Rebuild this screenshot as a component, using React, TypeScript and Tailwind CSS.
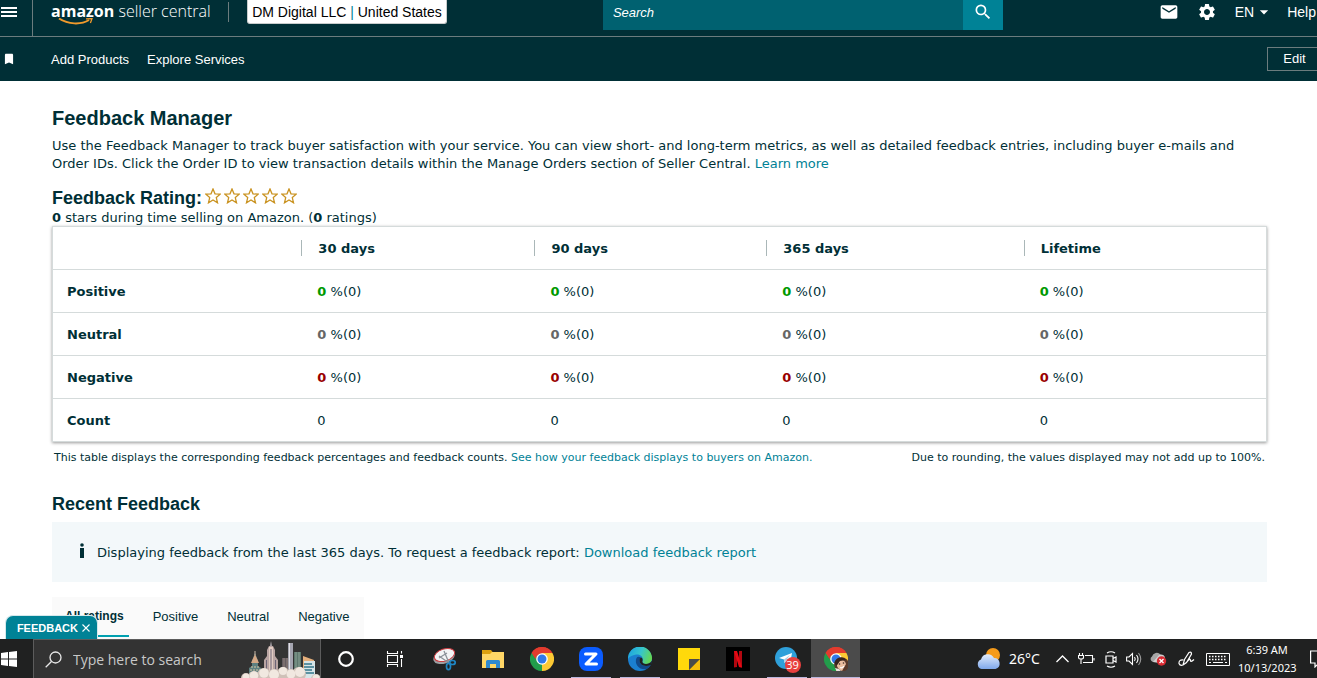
import type { ReactNode } from 'react';
import { MdBookmark, MdEmail, MdSettings, MdArrowDropDown, MdSearch } from 'react-icons/md';

const periods = ['30 days', '90 days', '365 days', 'Lifetime'];

const ratings = [
  { label: 'Positive', color: 'text-[#009900]' },
  { label: 'Neutral', color: 'text-[#666666]' },
  { label: 'Negative', color: 'text-[#990000]' },
];

function SellerLogo() {
  return (
    <a href="#" className="block w-[159px] whitespace-nowrap text-white">
      <span className="block h-[18px] font-['Open_Sans'] text-[16px] leading-[22px]">
        <b>amazon</b> <span className="font-['Open_Sans'] font-light">seller central</span>
      </span>
      <svg width="50" height="8" viewBox="0 0 50 8" fill="none">
        <path d="M8 .5C17 6.500 30 7 38 2" stroke="#f19a2c" strokeWidth="2" />
        <path d="M35 .8L41 .6L39.4 5" stroke="#f19a2c" strokeWidth="1.3" />
      </svg>
    </a>
  );
}

function Header() {
  return (
    <header className="bg-[#002f36] font-['Liberation_Sans',sans-serif] text-white">
      <div className="flex h-[37px] items-start justify-between border-b border-[#6b7c7e]">
        <div className="flex items-start">
          <button aria-label="Menu" className="flex h-9 w-[33px] items-start border-r border-[#6b7c7e] pt-[7px] pl-px">
            <svg width="16" height="11" viewBox="0 0 16 11" fill="#fff">
              <rect width="16" height="2" />
              <rect y="4" width="16" height="2" />
              <rect y="8" width="16" height="2" />
            </svg>
          </button>
          <div className="pl-[18px]">
            <SellerLogo />
          </div>
          <span className="mt-[2px] mr-[18px] ml-[18px] h-5 w-px bg-[#6b7c7e]" />
          <button className="h-6 w-[200px] rounded-b-[3px] border border-t-0 border-[#c8cccc] bg-white pt-px text-[14px] whitespace-nowrap text-black">
            <span className="font-medium">DM Digital LLC</span> <span className="text-[#008296]">|</span> United States
          </button>
        </div>
        <form className="flex h-[30px]">
          <input
            aria-label="Search"
            placeholder="Search"
            className="w-[360px] bg-[#006170] px-[10px] pb-1 text-[13px] italic placeholder:text-white"
          />
          <button aria-label="Submit search" type="button" className="flex w-10 justify-center bg-[#008296] pt-[2px]">
            <MdSearch size={20} />
          </button>
        </form>
        <div className="flex h-6 items-center pr-px text-[14px]">
          <button aria-label="Messages" className="mr-[18px]">
            <MdEmail size={20} />
          </button>
          <button aria-label="Settings" className="mr-[18px]">
            <MdSettings size={20} />
          </button>
          <button className="mr-[13px] flex items-center">
            EN
            <MdArrowDropDown size={20} />
          </button>
          <a href="#">Help</a>
        </div>
      </div>
      <div className="flex h-11 items-center text-[13px]">
        <button aria-label="Bookmarks" className="w-[51px] pl-[2px]">
          <MdBookmark size={14} />
        </button>
        <nav className="flex gap-[18px] pt-[2px]">
          <a href="#">Add Products</a>
          <a href="#">Explore Services</a>
        </nav>
        <button className="ml-auto h-6 w-[50px] border border-r-0 border-[#6b7c7e] pl-1">Edit</button>
      </div>
    </header>
  );
}

function Stars() {
  return (
    <span className="flex gap-[3px] pb-1" role="img" aria-label="0 out of 5 stars">
      {[1, 2, 3, 4, 5].map((n) => (
        <svg key={n} width="16" height="16" viewBox="0 0 16 16" fill="none" stroke="#c9921f" strokeWidth="1.3">
          <path d="M8 1L10 5.800L15.200 6.200L11.300 9.600L12.500 14.800L8 12L3.500 14.800L4.700 9.600L.8 6.200L6 5.800Z" />
        </svg>
      ))}
    </span>
  );
}

function RatingTable() {
  return (
    <table className="w-full table-fixed border-collapse text-left shadow-[0_1px_3px_rgba(0,0,0,0.4)]">
      <colgroup>
        <col className="w-[20.5%]" />
        <col className="w-[19.2%]" />
        <col className="w-[19.1%]" />
        <col className="w-[21.2%]" />
        <col className="w-[20%]" />
      </colgroup>
      <thead>
        <tr className="h-[43px] border border-[#d5dbdb]">
          <td />
          {periods.map((period) => (
            <th key={period} scope="col">
              <span className="flex items-center">
                <span className="mr-4 h-4 w-px bg-[#aab7b8]" />
                <span className="pt-[2px]">{period}</span>
              </span>
            </th>
          ))}
        </tr>
      </thead>
      <tbody>
        {ratings.map((row) => (
          <tr key={row.label} className="h-[43px] border border-[#d5dbdb]">
            <th scope="row" className="pt-[2px] pl-[14px]">{row.label}</th>
            {periods.map((period) => (
              <td key={period} className="pt-[2px] pl-4">
                <b className={row.color}>0</b> %(0)
              </td>
            ))}
          </tr>
        ))}
        <tr className="h-[43px] border border-[#d5dbdb]">
          <th scope="row" className="pt-[2px] pl-[14px]">Count</th>
          {periods.map((period) => (
            <td key={period} className="pt-[2px] pl-4">0</td>
          ))}
        </tr>
      </tbody>
    </table>
  );
}

function Skyline() {
  return (
    <svg width="80" height="38" viewBox="0 0 80 38">
      <path d="M9 38V28L12 26V21L15 13L18 21V26L21 28V38Z" fill="#5d7f80" />
      <path d="M11 23L15 14L19 23Z" fill="#d5a886" />
      <path d="M15 11V15" stroke="#c8b8a8" />
      <path d="M11 27H20M10 30H20M10 33H20" stroke="#d9c7a2" strokeDasharray="2 1" />
      <path d="M30 8L31 1L32 8Z" fill="#d8cfd8" />
      <path d="M24 38V20L27 16V10L29 6H33L35 10V16L38 20V38Z" fill="#b9a5a3" />
      <path d="M29 7H33V38H29Z" fill="#e0cbc2" />
      <path d="M26.500 20V38M31 9V38M35.500 20V38" stroke="#6d6577" />
      <rect x="42" y="18" width="8" height="16" fill="#655c61" />
      <path d="M44 18V34M47 18V34" stroke="#91817d" />
      <rect x="48" y="3" width="5" height="30" fill="#a5a5b0" />
      <path d="M49.500 3V33" stroke="#e2dfe4" />
      <rect x="54" y="12" width="7" height="22" fill="#5d776d" />
      <path d="M56 12V34M59 12V34" stroke="#8ca497" />
      <path d="M63 22V16L74 20V38H63Z" fill="#e6b07c" />
      <rect x="64" y="21" width="11" height="17" fill="#d7e5e8" />
      <path d="M64 24H72M64 27H74M64 30H72M64 33H74" stroke="#34778b" strokeWidth="1.5" />
      <g fill="#cfc1b8">
        <circle cx="6" cy="38" r="5" />
        <circle cx="14" cy="37" r="6" />
        <circle cx="24" cy="35" r="7" />
        <circle cx="34" cy="36" r="7" />
        <circle cx="43" cy="33" r="6" />
        <circle cx="51" cy="35" r="6" />
        <circle cx="59" cy="34" r="7" />
        <circle cx="76" cy="39" r="5" />
      </g>
      <g fill="#f1e8e0">
        <circle cx="6" cy="37" r="3.500" />
        <circle cx="14" cy="35.500" r="4.300" />
        <circle cx="24" cy="33" r="4.800" />
        <circle cx="34" cy="34.500" r="5" />
        <circle cx="43" cy="31" r="4" />
        <circle cx="51" cy="34" r="4.500" />
        <circle cx="60" cy="32" r="5" />
        <circle cx="76" cy="38" r="3.500" />
      </g>
    </svg>
  );
}

function ChromeIcon({ children }: { children?: ReactNode }) {
  return (
    <svg width="24" height="24" viewBox="0 0 24 24">
      <path d="M12 12L1.6 6A12 12 0 0 1 22.4 6Z" fill="#e33b2e" />
      <path d="M12 12L22.4 6A12 12 0 0 1 12 24Z" fill="#fcc934" />
      <path d="M12 12V24A12 12 0 0 1 1.6 6Z" fill="#229d4b" />
      <path d="M12 6H22.4L17 15L12 24L17 14Z" fill="#fcc934" />
      <path d="M1.6 6L7 15L12 17.5L11 6Z" fill="#229d4b" />
      <path d="M1.6 6A12 12 0 0 1 22.4 6H12L7 9L5.5 12Z" fill="#e33b2e" />
      <circle cx="12" cy="12" r="5.8" fill="#fff" />
      <circle cx="12" cy="12" r="4.5" fill="#3079e8" />
      {children}
    </svg>
  );
}

function TaskItem({ label, open, active, children }: { label: string; open?: boolean; active?: boolean; children: ReactNode }) {
  return (
    <button
      aria-label={label}
      className={`flex h-[39px] w-[49px] items-center justify-center pt-[2px] ${active ? 'bg-[#4b4b4b]' : ''}`}
    >
      <span
        className={`flex h-full items-center justify-center border-b ${active ? 'w-full' : 'w-10'} ${
          open ? 'border-[#b9b5dc]' : 'border-transparent'
        }`}
      >
        {children}
      </span>
    </button>
  );
}

function Taskbar() {
  return (
    <footer className="flex h-[39px] shrink-0 items-center overflow-hidden bg-[#202121] font-['Open_Sans',sans-serif] text-white">
      <button aria-label="Start" className="w-[33px] shrink-0 pl-px">
        <svg width="16" height="16" viewBox="0 0 16 16" fill="#fff">
          <path d="M0 2L7 1V7.5H0ZM8 .9L16 0V7.5H8ZM0 8.5H7V15L0 14ZM8 8.5H16V16L8 15.1Z" />
        </svg>
      </button>
      <label className="flex h-[39px] w-72 shrink-0 items-center border border-b-0 border-[#5c5c5c] bg-[#333333] pl-[11px]">
        <svg width="17" height="17" viewBox="0 0 17 17" fill="none" stroke="#e8e8e8" strokeWidth="1.3">
          <circle cx="10.5" cy="6.5" r="5.5" />
          <path d="M6.5 10.5L.7 16.3" />
        </svg>
        <input
          aria-label="Type here to search"
          placeholder="Type here to search"
          className="ml-[11px] w-[150px] bg-transparent text-[14px] placeholder:text-[#c8c8c8]"
        />
        <span className="ml-auto">
          <Skyline />
        </span>
      </label>
      <TaskItem label="Cortana">
        <svg width="16" height="16" viewBox="0 0 16 16" fill="none" stroke="#fff" strokeWidth="2.2">
          <circle cx="8" cy="8" r="6.8" />
        </svg>
      </TaskItem>
      <TaskItem label="Task View">
        <svg width="18" height="16" viewBox="0 0 18 16" fill="none" stroke="#fff" strokeWidth="1.1">
          <path d="M1.5 0V2.5H11.5V0M1.5 16V13.5H11.5V16M1.5 4.5H11.5V11.5H1.5ZM15.5 0V2.5M15.5 8V16" />
          <path d="M14 4H17V7H14Z" fill="#fff" stroke="none" />
        </svg>
      </TaskItem>
      <TaskItem label="Snipping Tool">
        <svg width="24" height="24" viewBox="0 0 24 24" fill="none">
          <ellipse cx="12" cy="10" rx="11" ry="6.5" transform="rotate(-18 12 10)" fill="#9c9fa3" />
          <ellipse cx="12.5" cy="8" rx="10.5" ry="6" transform="rotate(-18 12.5 8)" fill="#f3f4f5" stroke="#cc3d42" />
          <path d="M7 11L15 6M12 4L17 16M7 9L17 16" stroke="#8b9299" strokeWidth="1.3" />
          <ellipse cx="16.5" cy="19.5" rx="2" ry="3.2" stroke="#1f86c4" strokeWidth="1.7" />
          <ellipse cx="20.5" cy="15.5" rx="2.7" ry="2" stroke="#1f86c4" strokeWidth="1.7" />
        </svg>
      </TaskItem>
      <TaskItem label="File Explorer">
        <svg width="22" height="19" viewBox="0 0 22 19">
          <path d="M0 0H9L11 2.5H21V6H0Z" fill="#dda10f" />
          <path d="M0 4H8L10 2H22V18H0Z" fill="#ffd766" />
          <path d="M4 18V11.5Q4 10 5.5 10H16.500Q18 10 18 11.500V18H14V14H8V18Z" fill="#2f8ad0" />
        </svg>
      </TaskItem>
      <TaskItem label="Chrome">
        <ChromeIcon />
      </TaskItem>
      <TaskItem label="Zoom" open>
        <svg width="24" height="24" viewBox="0 0 24 24" fill="none">
          <rect width="24" height="24" rx="8" fill="#0b5cff" />
          <path d="M6.500 7H17L7 17H17.500" stroke="#fff" strokeWidth="3" strokeLinejoin="round" strokeLinecap="round" />
        </svg>
      </TaskItem>
      <TaskItem label="Edge" open>
        <svg width="24" height="24" viewBox="0 0 24 24">
          <defs>
            <linearGradient id="edgeTop" x1="0" x2="1" y1=".3" y2=".6">
              <stop offset="0" stopColor="#1ea4e0" />
              <stop offset=".5" stopColor="#36c5cd" />
              <stop offset="1" stopColor="#67d94e" />
            </linearGradient>
          </defs>
          <circle cx="12" cy="12" r="12" fill="#1b7fd0" />
          <path d="M0 12A12 12 0 0 1 24 11C24 15 21 17 18 17C15 17 14 15.500 14.500 14C16 10 12 7 8 7.500C4 8 1 10 0 12Z" fill="url(#edgeTop)" />
          <path d="M8.500 11C6 17 11 23 18 22.300C20.500 21 22 19.500 23 17.500C19 20 12 19 11.500 14C11.400 12 12.500 11 13 10.500C11 9.500 9.500 9.500 8.500 11Z" fill="#114a8b" />
          <path d="M11.500 13.500C11.500 18 17 20.500 23 17.700L24.500 13C23 16 20 17 18 17C15 17 14 15.500 14.500 14C15 12 14 10.500 13 10.500C12 11 11.500 12 11.500 13.500Z" fill="#202121" />
        </svg>
      </TaskItem>
      <TaskItem label="Sticky Notes">
        <svg width="22" height="22" viewBox="0 0 22 22">
          <path d="M0 0H22V11H11V22H0Z" fill="#ffd90b" />
          <path d="M11 11H22L11 22Z" fill="#4a4a4a" />
          <path d="M22 11V22H11Z" fill="#f5bd0b" />
        </svg>
      </TaskItem>
      <TaskItem label="Netflix">
        <svg width="24" height="24" viewBox="0 0 24 24">
          <rect width="24" height="24" fill="#000" />
          <path d="M8 4H11V20L8 20.500ZM13 4H16V20.500L13 20Z" fill="#b20710" />
          <path d="M8 4H11L16 20.500L13 20Z" fill="#e50914" />
        </svg>
      </TaskItem>
      <TaskItem label="Telegram" open>
        <span className="relative">
          <svg width="24" height="24" viewBox="0 0 24 24">
            <circle cx="11" cy="11" r="11" fill="#2fa0da" />
            <path d="M4 11L17 6L15 17L11.500 14L9.500 16L9 12.500Z" fill="#fff" />
            <path d="M9 12.500L15 8L11 13.500L9.500 16Z" fill="#a9cfe6" />
          </svg>
          <span className="absolute top-[10px] left-[10px] h-4 w-4 rounded-full bg-[#e8403f] text-center text-[11px] leading-4">39</span>
        </span>
      </TaskItem>
      <TaskItem label="Chrome profile" open active>
        <ChromeIcon>
          <circle cx="17.500" cy="17.500" r="7.300" fill="#5b3a2b" />
          <path d="M12 16C14 11 21 12 22 17L18 24C14 22 13 20 12 16Z" fill="#ecbfa0" />
          <path d="M10.500 16C12 10 19 9 22 13L16 14L12.500 19Z" fill="#37241d" />
          <circle cx="15.500" cy="17" r=".8" fill="#402a24" />
          <circle cx="19.500" cy="16" r=".8" fill="#402a24" />
          <path d="M16 20.500Q18.500 21.500 20 19" fill="none" stroke="#fff" strokeWidth="1.200" />
          <path d="M11 21L15 22L18 25H13Z" fill="#e6e2df" />
        </ChromeIcon>
      </TaskItem>

      <div className="ml-auto flex shrink-0 items-center pt-px">
        <svg width="25" height="22" viewBox="0 0 25 22">
          <defs>
            <linearGradient id="cloud" x1="0" x2="0" y1="0" y2="1">
              <stop offset="0" stopColor="#e3edfc" />
              <stop offset="1" stopColor="#7fa8eb" />
            </linearGradient>
          </defs>
          <circle cx="17" cy="7" r="7" fill="#f59b1b" />
          <path d="M5.500 21A5 5 0 0 1 5 11.500A7 7 0 0 1 18 10A5.600 5.600 0 0 1 19.500 21Z" fill="url(#cloud)" />
        </svg>
        <span className="ml-2 w-[30px] text-[14px] leading-5 whitespace-nowrap font-['Noto_Sans']">26°C</span>
        <svg className="ml-[17px]" width="13" height="8" viewBox="0 0 13 8" fill="none" stroke="#fff" strokeWidth="1.300">
          <path d="M.5 7L6.500 1L12.500 7" />
        </svg>
        <svg className="ml-[9px]" width="17" height="12" viewBox="0 0 17 12" fill="none" stroke="#fff" strokeWidth="1.100">
          <path d="M7 2.500H14.500V9.500H5M16 5V7.500M1.500 0V2.500M4.500 0V2.500M.5 2.500H5.500V4.500Q5.500 6 3 6Q.5 6 .5 4.500ZM3 6V11" />
        </svg>
        <svg className="ml-[10px]" width="12" height="17" viewBox="0 0 12 17" fill="none" stroke="#fff" strokeWidth="1.200">
          <path d="M1 5H8V12H1ZM8 7.500L11 6V11L8 9.500M2 2Q6 -.5 10 2M2 15Q6 17.500 10 15" />
        </svg>
        <svg className="ml-[9px]" width="16" height="14" viewBox="0 0 16 14" fill="none" stroke="#fff" strokeWidth="1.100">
          <path d="M.6 5H3L6.500 1.500V12.500L3 9H.6ZM8.500 5Q10 7 8.500 9M10.500 3Q13.500 7 10.500 11" />
          <path d="M12.500 1Q17 7 12.500 13" stroke="#999" />
        </svg>
        <svg className="ml-2" width="17" height="14" viewBox="0 0 17 14">
          <path d="M3 10A3 3 0 0 1 2 4.500A5 5 0 0 1 10.500 2.500L14 6L9 10Z" fill="#a6a6a6" />
          <path d="M3 10L9 3A4 4 0 0 1 15 7L9 11Z" fill="#d1d1d1" />
          <circle cx="11.500" cy="9" r="4.700" fill="#d92a32" />
          <path d="M9.500 7L13.500 11M13.500 7L9.500 11" stroke="#fff" strokeWidth="1.300" />
        </svg>
        <svg className="ml-[11px]" width="17" height="17" viewBox="0 0 17 17" fill="none" stroke="#fff" strokeWidth="1.200">
          <path d="M5 14L6.500 8.500L11 1.500Q13.500 .5 13.500 3L8.500 11.500L5 14M5.500 9Q.5 8.500 1 12.500Q2 15 5 14M8.500 11.500Q12 6.500 12.500 9Q12 12 16 8.500" />
        </svg>
        <svg className="ml-[11px]" width="24" height="13" viewBox="0 0 24 13" fill="none" stroke="#fff">
          <path d="M.5 .5H23.500V12.500H.5Z" />
          <path d="M3 3.500H21M3 6.500H21" strokeWidth="1.500" strokeDasharray="1.500 1.500" />
          <path d="M3 9.500H5M7 9.500H17M19 9.500H21" />
        </svg>
        <time className="ml-2 w-[58px] text-center font-['Noto_Sans'] text-[11px] leading-[18px] whitespace-nowrap">
          6:39 AM
          <br />
          10/13/2023
        </time>
        <svg className="ml-[14px]" width="7" height="18" viewBox="0 0 7 18" fill="none" stroke="#fff" strokeWidth="1.200">
          <path d="M8 1H.6V13H5V17L8 14" />
        </svg>
      </div>
    </footer>
  );
}

export default function App() {
  return (
    <div className="flex h-screen flex-col overflow-hidden bg-white">
      <Header />
      <main className="relative min-h-0 flex-1 overflow-hidden pt-6 pr-[50px] pl-[52px] font-['DejaVu_Sans',Verdana,sans-serif] text-[13px] leading-[18px] text-[#002f36]">
        <h1 className="font-['Liberation_Sans'] text-[20px] leading-[26px] font-bold">Feedback Manager</h1>
        <p className="mt-[6px]">
          Use the Feedback Manager to track buyer satisfaction with your service. You can view short- and long-term
          metrics, as well as detailed feedback entries, including buyer e-mails and Order IDs. Click the Order ID to
          view transaction details within the Manage Orders section of Seller Central.{' '}
          <a href="#" className="text-[#008296]">Learn more</a>
        </p>
        <div className="mt-[15px] flex h-5 items-center gap-[3px]">
          <h2 className="font-['Liberation_Sans'] text-[18px] leading-5 font-bold">Feedback Rating:</h2>
          <Stars />
        </div>
        <p className="h-[18px] leading-5">
          <b>0</b> stars during time selling on Amazon. (<b>0</b> ratings)
        </p>
        <RatingTable />
        <div className="mt-2 flex justify-between px-[2px] text-[11px] leading-4">
          <p>
            This table displays the corresponding feedback percentages and feedback counts.{' '}
            <a href="#" className="text-[#008296]">See how your feedback displays to buyers on Amazon.</a>
          </p>
          <p>Due to rounding, the values displayed may not add up to 100%.</p>
        </div>
        <h2 className="mt-7 font-['Liberation_Sans'] text-[18px] leading-5 font-bold">Recent Feedback</h2>
        <div className="mt-2 flex h-[60px] items-center bg-[#f3f8fa] pl-[27px]">
          <svg width="6" height="18" viewBox="0 0 6 18" fill="#002f36" className="mr-3">
            <circle cx="3" cy="2" r="1.800" />
            <path d="M1 5H5V15H1Z" />
          </svg>
          <p className="pt-[2px]">
            Displaying feedback from the last 365 days. To request a feedback report:{' '}
            <a href="#" className="text-[#008296]">Download feedback report</a>
          </p>
        </div>
        <div className="mt-[15px] flex h-12 w-[312px] gap-[19px] bg-[#fafafa] px-2 font-['Liberation_Sans'] text-[13px] leading-5 whitespace-nowrap">
          <button className="h-10 border-b-2 border-[#00a0b0] px-[5px] text-[12px] font-bold">All ratings</button>
          <button className="h-10 px-[5px]">Positive</button>
          <button className="h-10 px-[5px]">Neutral</button>
          <button className="h-10 px-[5px]">Negative</button>
        </div>
        <button className="absolute bottom-0 left-[5px] flex h-6 w-[93px] items-center justify-end gap-1 rounded-t-lg border border-b-0 border-[#d5e8eb] bg-[#008296] pr-[7px] font-['Liberation_Sans'] text-[11px] font-bold text-white">
          FEEDBACK
          <svg width="8" height="8" viewBox="0 0 8 8" stroke="#fff" strokeWidth="1.100">
            <path d="M.5 .5L7.500 7.500M7.500 .5L.5 7.500" />
          </svg>
        </button>
      </main>
      <Taskbar />
    </div>
  );
}
